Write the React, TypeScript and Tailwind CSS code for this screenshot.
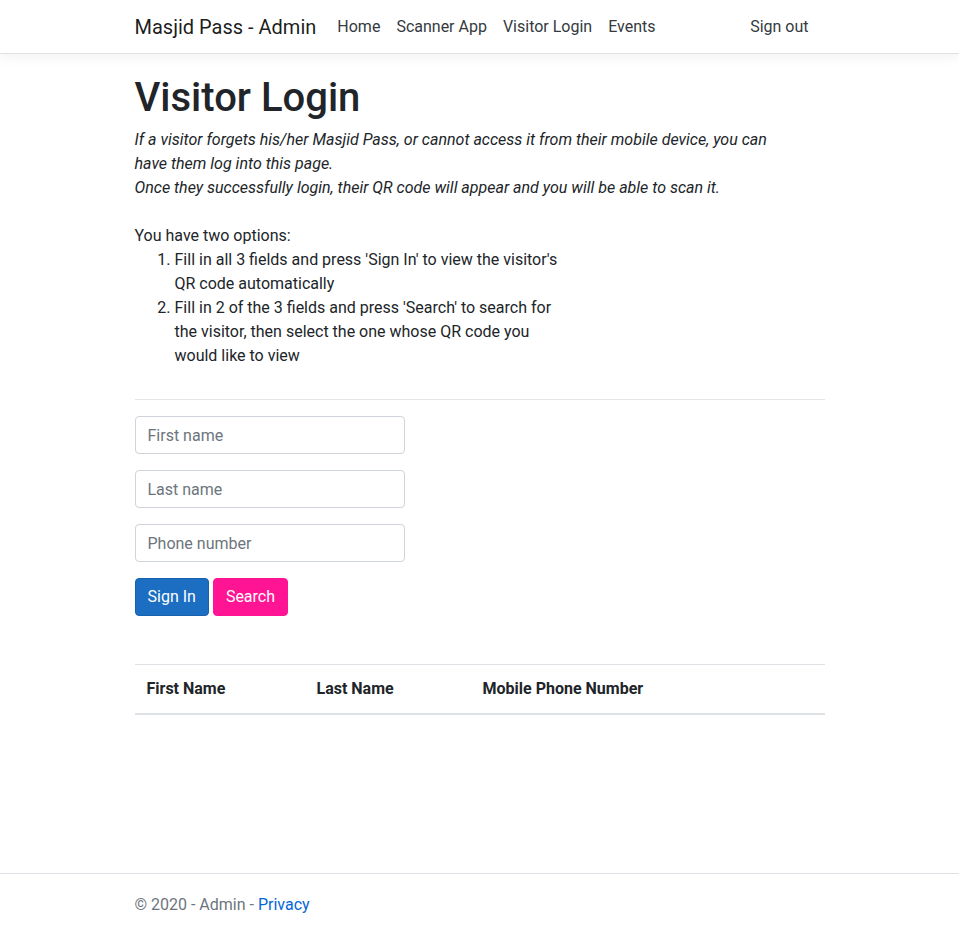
import React from 'react';

const navLinks = ['Home', 'Scanner App', 'Visitor Login', 'Events'];

function NavBar() {
  return (
    <header className="border-b border-[#dee2e6] bg-white shadow-[0_4px_12px_rgba(0,0,0,0.05)]">
      <nav className="mx-auto flex h-[53px] w-[720px] items-center px-[15px]">
        <a className="mr-[13px] text-[20px] leading-[30px] text-[rgba(0,0,0,0.9)]" href="#">
          Masjid Pass - Admin
        </a>
        <ul className="flex">
          {navLinks.map((l) => (
            <li key={l}>
              <a className="block px-2 text-[16px] leading-6 text-[#343a40]" href="#">
                {l}
              </a>
            </li>
          ))}
        </ul>
        <a className="ml-auto pr-4 text-[16px] leading-6 text-[#343a40]" href="#">
          Sign out
        </a>
      </nav>
    </header>
  );
}

function Field({ placeholder }: { placeholder: string }) {
  return (
    <div className="mb-4">
      <input
        type="text"
        placeholder={placeholder}
        className="block h-[38px] w-[270px] rounded-[4px] border border-[#ced4da] bg-white px-3 text-[16px] text-[#495057] placeholder:text-[#6c757d] focus:outline-none"
      />
    </div>
  );
}

export default function App() {
  return (
    <div className="flex min-h-[933px] flex-col bg-white font-['Roboto',sans-serif] text-[16px] leading-6 text-[#212529]">
      <NavBar />

      <main className="mx-auto mt-[18px] w-[720px] px-[15px] pb-4">
        <h1 className="mb-[6px] pt-[2px] text-[40px] font-medium leading-[48px]">Visitor Login</h1>
        <p className="italic">
          If a visitor forgets his/her Masjid Pass, or cannot access it from their mobile device, you can
          <br />
          have them log into this page.
          <br />
          Once they successfully login, their QR code will appear and you will be able to scan it.
        </p>
        <p className="mt-6">You have two options:</p>
        <ol className="list-decimal pl-10">
          <li>
            Fill in all 3 fields and press 'Sign In' to view the visitor's
            <br />
            QR code automatically
          </li>
          <li>
            Fill in 2 of the 3 fields and press 'Search' to search for
            <br />
            the visitor, then select the one whose QR code you
            <br />
            would like to view
          </li>
        </ol>

        <hr className="mt-[31px] mb-4 border-t border-[rgba(0,0,0,0.1)]" />

        <form onSubmit={(e) => e.preventDefault()}>
          <Field placeholder="First name" />
          <Field placeholder="Last name" />
          <Field placeholder="Phone number" />
          <div className="flex gap-1">
            <button
              type="submit"
              className="h-[38px] rounded-[4px] border border-[#1861ac] bg-[#1b6ec2] px-3 text-[16px] text-white"
            >
              Sign In
            </button>
            <button
              type="button"
              className="h-[38px] rounded-[4px] border border-[#ff1493] bg-[#ff1493] px-3 text-[16px] text-white"
            >
              Search
            </button>
          </div>
        </form>

        <table className="mt-12 w-full border-collapse text-left">
          <thead>
            <tr className="border-t border-[#dee2e6]">
              <th className="w-[170px] border-b-2 border-[#dee2e6] p-3 font-bold">First Name</th>
              <th className="w-[166px] border-b-2 border-[#dee2e6] p-3 font-bold">Last Name</th>
              <th className="border-b-2 border-[#dee2e6] p-3 font-bold">Mobile Phone Number</th>
            </tr>
          </thead>
          <tbody />
        </table>
      </main>

      <footer className="mt-auto h-[60px] border-t border-[#dee2e6] leading-[62px] whitespace-nowrap text-[#6c757d]">
        <div className="mx-auto w-[720px] px-[15px]">
          © 2020 - Admin -{' '}
          <a href="#" className="text-[#0366d6]">
            Privacy
          </a>
        </div>
      </footer>
    </div>
  );
}
